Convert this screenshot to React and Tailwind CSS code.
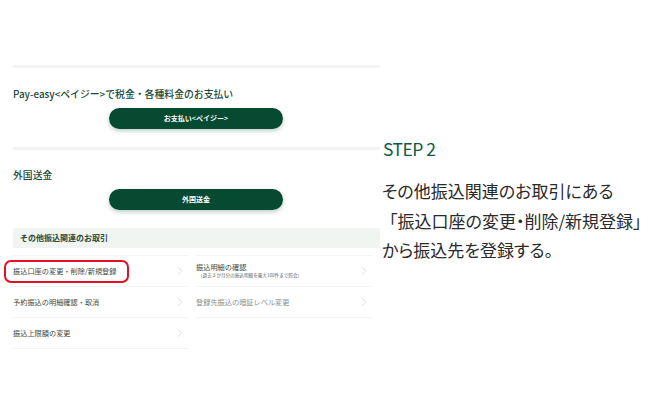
import { ChevronRight } from 'lucide-react';

const font = { fontFamily: '"Noto Sans CJK JP", "Noto Sans", sans-serif' };

function Row({ label, sub, muted, circled }) {
  return (
    <div className="relative h-[31px] flex items-center justify-between border-b border-[#f3f4f3]">
      <div className="min-w-0">
        <div className={`text-[7.2px] leading-[9px] whitespace-nowrap ${muted ? 'text-[#8a8f8c]' : 'text-[#3b4a43]'}`}>{label}</div>
        {sub && <div className="text-[4.6px] leading-[7px] pl-[2px] whitespace-nowrap text-[#5d6763]">{sub}</div>}
      </div>
      <ChevronRight className="w-[14px] h-[14px] mr-[2px] text-[#c4c8c6]" strokeWidth={1} />
      {circled && <div className="absolute left-[-9px] top-[4px] w-[125px] h-[23px] rounded-[7px] border-2 border-[#e60f23]" />}
    </div>
  );
}

export default function App() {
  return (
    <div className="w-[648px] h-[400px] bg-white flex overflow-hidden" style={font}>
      {/* Left: captured page */}
      <div className="w-[367px] ml-[13px] pt-[65px] shrink-0">
        <div className="h-[3px] bg-[#f3f4f3]" />
        <h2 className="mt-[20px] text-[9.85px] leading-[13px] font-medium text-[#21483a]">Pay-easy&lt;ペイジー&gt;で税金・各種料金のお支払い</h2>
        <div className="mt-[7px] flex justify-center pr-[1px]">
          <div className="w-[174px] h-[21px] rounded-full bg-[#074a32] shadow-[0_2px_4px_rgba(40,90,70,0.3)] flex items-center justify-center text-white text-[7px] font-bold">お支払い&lt;ペイジー&gt;</div>
        </div>
        <div className="mt-[18px] h-[3px] bg-[#f3f4f3]" />
        <h2 className="mt-[19px] text-[9.85px] leading-[13px] font-medium text-[#21483a]">外国送金</h2>
        <div className="mt-[7px] flex justify-center pr-[1px]">
          <div className="w-[174px] h-[21px] rounded-full bg-[#074a32] shadow-[0_2px_4px_rgba(40,90,70,0.3)] flex items-center justify-center text-white text-[7px] font-bold">外国送金</div>
        </div>
        <div className="mt-[18px] h-[20px] bg-[#f1f5f2] pl-[7px] flex items-center text-[8px] font-bold text-[#2b4a3d]">その他振込関連のお取引</div>
        <div className="mt-[7px] flex gap-[7px]">
          <div className="w-[176px] border-t border-[#f3f4f3]">
            <Row label="振込口座の変更・削除/新規登録" circled />
            <Row label="予約振込の明細確認・取消" />
            <Row label="振込上限額の変更" />
          </div>
          <div className="w-[177px] border-t border-[#f3f4f3] self-start">
            <Row label="振込明細の確認" sub="（過去３か月分の振込明細を最大100件まで照会）" />
            <Row label="登録先振込の暗証レベル変更" muted />
          </div>
        </div>
      </div>
      {/* Right: step description */}
      <div className="pl-[2px] pt-[136px] w-[268px] shrink-0">
        <div className="pl-[1px] text-[17.5px] leading-[26px] text-[#0f5a43] tracking-[-0.5px]">STEP 2</div>
        <div className="mt-[14px] text-[17px] leading-[29.5px] text-[#2a2a2a] whitespace-nowrap [font-feature-settings:'palt']">
          <p>その他振込関連のお取引にある</p>
          <p className="pl-[7px]">「振込口座の変更・削除/新規登録」</p>
          <p>から振込先を登録する。</p>
        </div>
      </div>
    </div>
  );
}
